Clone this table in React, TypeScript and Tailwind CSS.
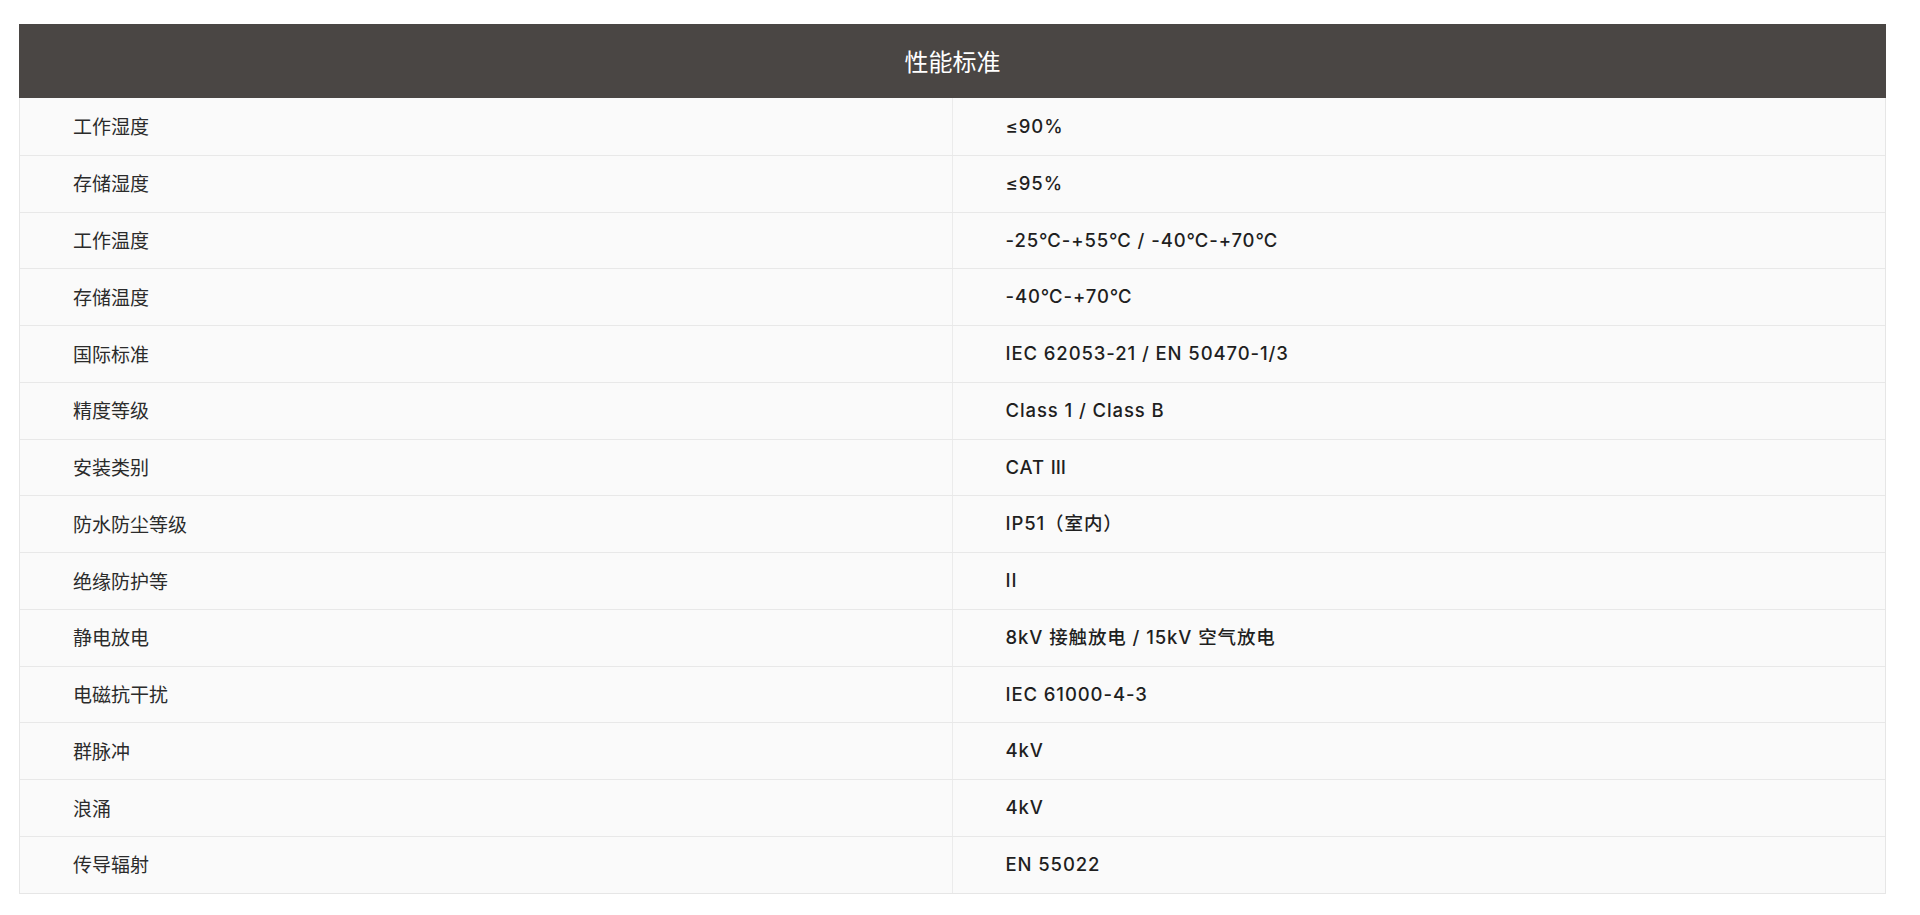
const rows: [string, string][] = [
  ['工作湿度', '≤90%'],
  ['存储湿度', '≤95%'],
  ['工作温度', '-25℃-+55℃ / -40℃-+70℃'],
  ['存储温度', '-40℃-+70℃'],
  ['国际标准', 'IEC 62053-21 / EN 50470-1/3'],
  ['精度等级', 'Class 1 / Class B'],
  ['安装类别', 'CAT Ⅲ'],
  ['防水防尘等级', 'IP51（室内）'],
  ['绝缘防护等', 'II'],
  ['静电放电', '8kV 接触放电 / 15kV 空气放电'],
  ['电磁抗干扰', 'IEC 61000-4-3'],
  ['群脉冲', '4kV'],
  ['浪涌', '4kV'],
  ['传导辐射', 'EN 55022'],
];

export default function App() {
  return (
    <div className="min-h-screen bg-white pt-[24px] px-[19px] pb-[20px]">
      <div className="w-[1867px] border border-[#e6e6e6]">
        {/* Title bar */}
        <div className="h-[74px] -mx-px -mt-px bg-[#4a4644] flex items-center justify-center">
          <span className="text-white text-[24px] font-['Noto_Sans_CJK_SC',sans-serif]">性能标准</span>
        </div>

        {rows.map(([label, value], i) => (
          <div
            key={label}
            className={`grid grid-cols-2 h-[56.75px] bg-[#fafafa] ${i > 0 ? 'border-t border-[#e8e8e8]' : ''}`}
          >
            <div className="flex items-center pl-[53px] border-r border-[#ebebeb] text-[19px] text-[#2b2b2b] font-['Noto_Sans_CJK_SC',sans-serif]">
              {label}
            </div>
            <div className="flex items-center pl-[53px] text-[18.5px] tracking-[0.9px] font-medium text-[#1f1f1f] font-['Inter','Noto_Sans_CJK_SC',sans-serif]">
              {value}
            </div>
          </div>
        ))}
      </div>
    </div>
  );
}
